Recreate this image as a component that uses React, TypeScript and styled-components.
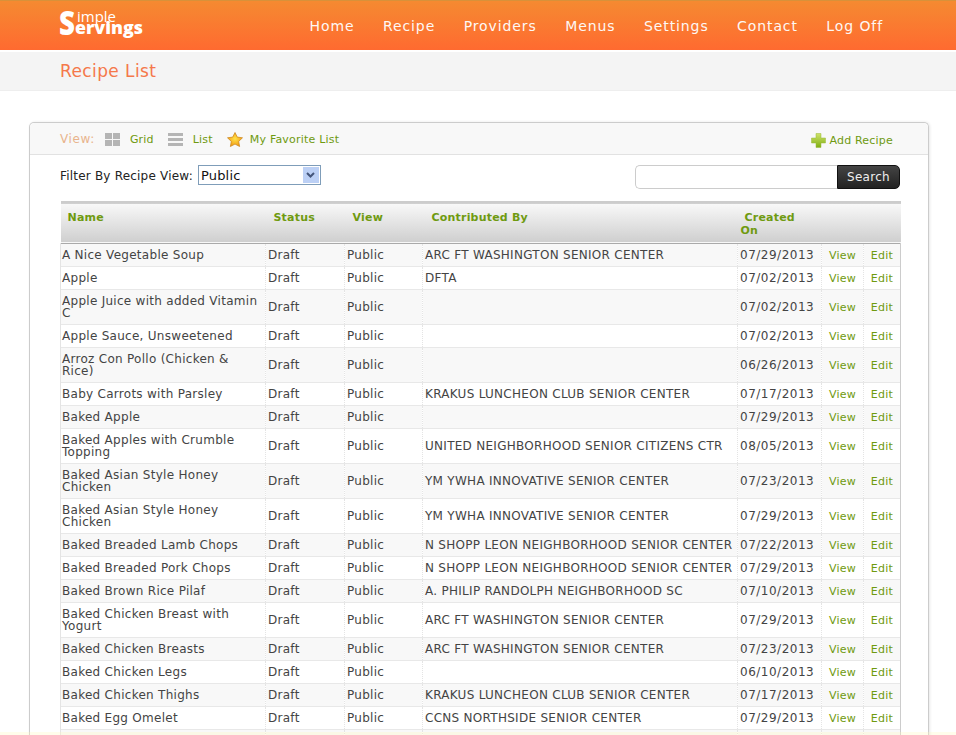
import React from "react";
import styled, { createGlobalStyle } from "styled-components";

const GlobalStyle = createGlobalStyle`
  html, body {
    margin: 0;
    padding: 0;
    background: #fff;
    overflow: hidden;
  }
  body {
    font-family: "DejaVu Sans", Verdana, sans-serif;
    color: #444;
  }
`;

const Page = styled.div`
  position: relative;
  width: 956px;
  height: 735px;
  overflow: hidden;
`;

const FooterTint = styled.div`
  position: absolute;
  left: 0;
  right: 0;
  bottom: 0;
  height: 3px;
  background: rgba(255, 248, 190, 0.3);
`;

const Header = styled.header`
  height: 50px;
  box-sizing: border-box;
  border-top: 1px solid #d8913a;
  background: linear-gradient(#f58a31, #ff6a30);
  display: flex;
  align-items: center;
  justify-content: space-between;
  padding: 0 73px 0 58px;
`;

const LogoMark = styled.svg`
  display: block;
  overflow: visible;
  font-family: "Open Sans", sans-serif;
`;

const Nav = styled.nav`
  display: flex;
  gap: 28.5px;
`;

const NavLink = styled.a`
  color: #fff;
  font-size: 14px;
  letter-spacing: 0.9px;
  opacity: 0.95;
`;

const TitleBar = styled.div`
  margin-top: 2px;
  height: 38px;
  background: #f4f4f4;
  border-bottom: 1px solid #eee;
  padding-left: 60px;
  display: flex;
  align-items: center;
`;

const Title = styled.h1`
  margin: 0;
  font-size: 17px;
  font-weight: 400;
  letter-spacing: 0.4px;
  color: #f5784a;
`;

const Panel = styled.section`
  margin: 31px 27px 0 29px;
  border: 1px solid #ccc;
  border-bottom: none;
  border-radius: 5px 5px 0 0;
  box-shadow: 1px 0 3px #e8e8e8;
`;

const PanelBar = styled.div`
  height: 30px;
  background: #f8f8f8;
  border-bottom: 1px solid #e2e2e2;
  border-radius: 5px 5px 0 0;
  display: flex;
  align-items: center;
  padding: 1px 35px 0 30px;
  font-size: 11px;
  letter-spacing: 0.2px;
  color: #6f9a10;
`;

const ViewLabel = styled.span`
  font-size: 12px;
  letter-spacing: 0.6px;
  color: #e8b48c;
  margin-right: 10px;
`;

const ViewLink = styled.a`
  display: flex;
  align-items: center;
  margin-right: 14px;
  gap: 10px;
`;

const StarLink = styled(ViewLink)`
  gap: 7px;
`;

const AddLink = styled.a`
  margin: 2px 0 0 auto;
  display: flex;
  align-items: center;
  gap: 3px;
`;

const Body = styled.div`
  padding: 10px 28px 0 30px;
`;

const FilterRow = styled.div`
  display: flex;
  justify-content: space-between;
  align-items: flex-start;
  height: 36px;
`;

const FilterLabel = styled.label`
  display: flex;
  align-items: center;
  gap: 5px;
  font-size: 12px;
  letter-spacing: 0.2px;
  color: #222;
  height: 20px;
`;

const FilterText = styled.span`
  margin-top: 2px;
`;

const FakeSelect = styled.div`
  width: 119px;
  height: 18px;
  border: 1px solid #7f9db9;
  display: flex;
  align-items: center;
  justify-content: space-between;
  padding-left: 2px;
  font-size: 13px;
  color: #111;
`;

const SelectArrow = styled.span`
  width: 16px;
  height: 16px;
  margin-right: 1px;
  background: #bcd0f5;
  display: flex;
  align-items: center;
  justify-content: center;
`;

const SearchBox = styled.div`
  display: flex;
  height: 24px;
`;

const SearchInput = styled.div`
  width: 201px;
  border: 1px solid #ccc;
  border-right: none;
  border-radius: 5px 0 0 5px;
`;

const SearchButton = styled.button`
  width: 63px;
  padding: 0;
  border: 1px solid #111;
  border-radius: 0 5px 5px 0;
  background: linear-gradient(#444, #222);
  color: #eee;
  font-family: inherit;
  font-size: 12px;
  letter-spacing: 0.3px;
`;

const Table = styled.table`
  width: 840px;
  table-layout: fixed;
  border-collapse: collapse;
  font-size: 12px;
  letter-spacing: 0.28px;
`;

const HeadRow = styled.tr`
  height: 41px;
  background: linear-gradient(#f8f8f8, #cfcfcf);
  border-top: 2px solid #ccc;
  border-bottom: 1px solid #aaa;
`;

const Th = styled.th<{ $indent?: number }>`
  padding: 8px 0 0 ${(p) => p.$indent ?? 8}px;
  vertical-align: top;
  text-align: left;
  font-size: 11px;
  letter-spacing: 0.2px;
  line-height: 13px;
  color: #6f9a10;
`;

const Row = styled.tr<{ $shaded: boolean }>`
  height: 23px;
  background: ${(p) => (p.$shaded ? "#f8f8f8" : "#fff")};
  border-bottom: 1px solid #e8e8e8;
`;

const Td = styled.td<{ $inset?: number }>`
  padding: 5px 2px 5px ${(p) => p.$inset ?? 2}px;
  line-height: 12px;
  color: #444;
  border-left: 1px dotted #e4e4e4;
  overflow: hidden;
`;

const NameCell = styled(Td)`
  border-left: 1px solid #e4e4e4;
`;

const DateCell = styled(Td)`
  letter-spacing: 0.5px;
`;

const LinkCell = styled(Td)`
  padding-top: 6px;
  padding-bottom: 4px;
  font-size: 11px;
  color: #6f9a10;
  text-align: center;
`;

const EditCell = styled(LinkCell)`
  border-right: 1px solid #ccc;
`;

const columnWidths = [205, 79, 78, 315, 84, 42, 37];

const recipes: [string, string, string][] = [
  ["A Nice Vegetable Soup", "ARC FT WASHINGTON SENIOR CENTER", "07/29/2013"],
  ["Apple", "DFTA", "07/02/2013"],
  ["Apple Juice with added Vitamin C", "", "07/02/2013"],
  ["Apple Sauce, Unsweetened", "", "07/02/2013"],
  ["Arroz Con Pollo (Chicken & Rice)", "", "06/26/2013"],
  ["Baby Carrots with Parsley", "KRAKUS LUNCHEON CLUB SENIOR CENTER", "07/17/2013"],
  ["Baked Apple", "", "07/29/2013"],
  ["Baked Apples with Crumble Topping", "UNITED NEIGHBORHOOD SENIOR CITIZENS CTR", "08/05/2013"],
  ["Baked Asian Style Honey Chicken", "YM YWHA INNOVATIVE SENIOR CENTER", "07/23/2013"],
  ["Baked Asian Style Honey Chicken", "YM YWHA INNOVATIVE SENIOR CENTER", "07/29/2013"],
  ["Baked Breaded Lamb Chops", "N SHOPP LEON NEIGHBORHOOD SENIOR CENTER", "07/22/2013"],
  ["Baked Breaded Pork Chops", "N SHOPP LEON NEIGHBORHOOD SENIOR CENTER", "07/29/2013"],
  ["Baked Brown Rice Pilaf", "A. PHILIP RANDOLPH NEIGHBORHOOD SC", "07/10/2013"],
  ["Baked Chicken Breast with Yogurt", "ARC FT WASHINGTON SENIOR CENTER", "07/29/2013"],
  ["Baked Chicken Breasts", "ARC FT WASHINGTON SENIOR CENTER", "07/23/2013"],
  ["Baked Chicken Legs", "", "06/10/2013"],
  ["Baked Chicken Thighs", "KRAKUS LUNCHEON CLUB SENIOR CENTER", "07/17/2013"],
  ["Baked Egg Omelet", "CCNS NORTHSIDE SENIOR CENTER", "07/29/2013"],
];

function App() {
  return (
    <Page>
      <GlobalStyle />
      <Header>
        <LogoMark width="88" height="34" viewBox="0 0 88 34" fill="#fff">
          <text x="1" y="26" fontSize="34" fontWeight="800" textLength="16" lengthAdjust="spacingAndGlyphs">S</text>
          <text x="19" y="13" fontSize="14" textLength="39" lengthAdjust="spacingAndGlyphs">imple</text>
          <text x="17" y="25" fontSize="18" fontWeight="800" textLength="68" lengthAdjust="spacingAndGlyphs">ervings</text>
        </LogoMark>
        <Nav>
          {["Home", "Recipe", "Providers", "Menus", "Settings", "Contact", "Log Off"].map((n) => (
            <NavLink key={n}>{n}</NavLink>
          ))}
        </Nav>
      </Header>
      <TitleBar>
        <Title>Recipe List</Title>
      </TitleBar>
      <Panel>
        <PanelBar>
          <ViewLabel>View:</ViewLabel>
          <ViewLink>
            <svg width="15" height="13" viewBox="0 0 15 13" fill="#b5b5b5">
              <rect width="7" height="6" />
              <rect x="8" width="7" height="6" />
              <rect y="7" width="7" height="6" />
              <rect x="8" y="7" width="7" height="6" />
            </svg>
            Grid
          </ViewLink>
          <ViewLink>
            <svg width="15" height="13" viewBox="0 0 15 13" fill="#b5b5b5">
              <rect width="15" height="3" />
              <rect y="5" width="15" height="3" />
              <rect y="10" width="15" height="3" />
            </svg>
            List
          </ViewLink>
          <StarLink>
            <svg width="16" height="15" viewBox="0 0 16 15">
              <defs>
                <radialGradient id="starFill" cx="50%" cy="45%" r="55%">
                  <stop offset="0%" stopColor="#ffe24a" />
                  <stop offset="100%" stopColor="#f29a12" />
                </radialGradient>
              </defs>
              <path
                d="M8 .5l2.300 4.600 5.200.7-3.800 3.600.9 5.100L8 12.100l-4.600 2.400.9-5.100L.5 5.800l5.200-.7z"
                fill="url(#starFill)"
                stroke="#c8821a"
                strokeWidth=".7"
                strokeLinejoin="round"
              />
            </svg>
            My Favorite List
          </StarLink>
          <AddLink>
            <svg width="15" height="15" viewBox="0 0 15 15">
              <defs>
                <linearGradient id="plusFill" x1="0" y1="0" x2="0" y2="1">
                  <stop offset="0%" stopColor="#cfe36a" />
                  <stop offset="100%" stopColor="#7fae12" />
                </linearGradient>
              </defs>
              <path d="M5 .5h5v4.500h4.500v5H10v4.500H5V10H.5V5H5z" fill="url(#plusFill)" stroke="#9ab83a" strokeWidth=".5" />
            </svg>
            Add Recipe
          </AddLink>
        </PanelBar>
        <Body>
          <FilterRow>
            <FilterLabel>
              <FilterText>Filter By Recipe View:</FilterText>
              <FakeSelect>
                Public
                <SelectArrow>
                  <svg width="9" height="6" viewBox="0 0 9 6">
                    <path d="M1 1l3.500 3.500L8 1" fill="none" stroke="#44557a" strokeWidth="2" />
                  </svg>
                </SelectArrow>
              </FakeSelect>
            </FilterLabel>
            <SearchBox>
              <SearchInput />
              <SearchButton>Search</SearchButton>
            </SearchBox>
          </FilterRow>
          <Table>
            <colgroup>
              {columnWidths.map((w, i) => (
                <col key={i} style={{ width: w }} />
              ))}
            </colgroup>
            <thead>
              <HeadRow>
                <Th $indent={7}>Name</Th>
                <Th>Status</Th>
                <Th>View</Th>
                <Th $indent={9}>Contributed By</Th>
                <Th $indent={3}>
                  &nbsp;Created
                  <br />
                  On
                </Th>
                <Th />
                <Th />
              </HeadRow>
            </thead>
            <tbody>
              {recipes.map(([name, by, date], i) => (
                <Row key={i} $shaded={i % 2 === 0}>
                  <NameCell $inset={1}>{name}</NameCell>
                  <Td>Draft</Td>
                  <Td>Public</Td>
                  <Td>{by}</Td>
                  <DateCell>{date}</DateCell>
                  <LinkCell>View</LinkCell>
                  <EditCell>Edit</EditCell>
                </Row>
              ))}
              <Row $shaded>
                <NameCell />
                <Td />
                <Td />
                <Td />
                <DateCell />
                <LinkCell />
                <EditCell />
              </Row>
            </tbody>
          </Table>
        </Body>
      </Panel>
      <FooterTint />
    </Page>
  );
}

export default App;
